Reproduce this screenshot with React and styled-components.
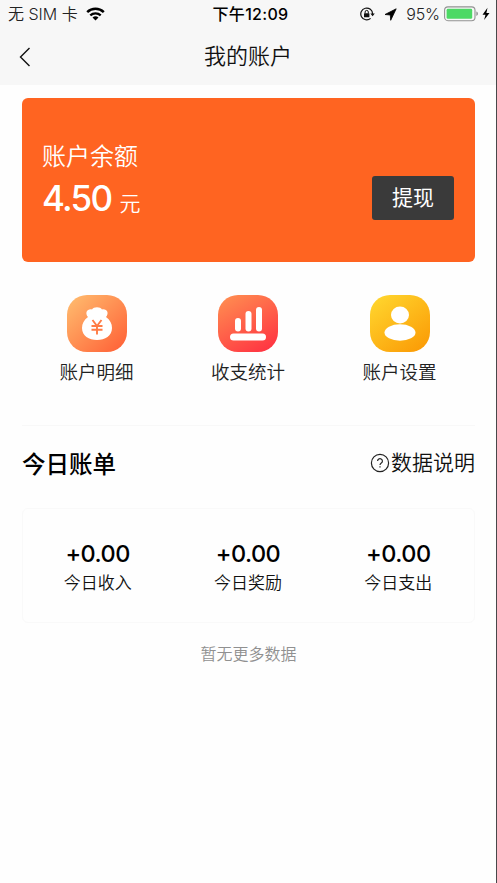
import styled, { createGlobalStyle } from "styled-components";

const services = [
  { label: "账户明细", icon: <BagIcon /> },
  { label: "收支统计", icon: <ChartIcon /> },
  { label: "账户设置", icon: <UserIcon /> },
];

const stats = [
  { label: "今日收入", value: "+0.00" },
  { label: "今日奖励", value: "+0.00" },
  { label: "今日支出", value: "+0.00" },
];

export default function App() {
  return (
    <Page>
      <GlobalStyle />
      <Header>
        <StatusBar>
          <Carrier>
            无 SIM 卡
            <WifiIcon />
          </Carrier>
          <Clock>下午12:09</Clock>
          <Indicators>
            <LockIcon />
            <LocationIcon />
            <Percent>95%</Percent>
            <BatteryIcon />
          </Indicators>
        </StatusBar>
        <NavBar>
          <BackButton aria-label="返回">
            <svg width="12" height="20" viewBox="0 0 12 20" fill="none">
              <path d="M10.5 1L1.5 10l9 9" stroke="#111" strokeWidth="1.4" />
            </svg>
          </BackButton>
          <h1>我的账户</h1>
        </NavBar>
      </Header>
      <Content>
        <BalanceCard>
          <div>
            <p className="label">账户余额</p>
            <p className="amount">
              4.50<span>元</span>
            </p>
          </div>
          <WithdrawButton>提现</WithdrawButton>
        </BalanceCard>
        <Services>
          {services.map((item) => (
            <Service key={item.label}>
              {item.icon}
              <span>{item.label}</span>
            </Service>
          ))}
        </Services>
        <BillHeader>
          <h2>今日账单</h2>
          <Help>
            <HelpIcon />
            数据说明
          </Help>
        </BillHeader>
        <StatsCard>
          {stats.map((item) => (
            <Stat key={item.label}>
              <strong>{item.value}</strong>
              <span>{item.label}</span>
            </Stat>
          ))}
        </StatsCard>
        <Empty>暂无更多数据</Empty>
      </Content>
    </Page>
  );
}

function WifiIcon() {
  return (
    <svg width="19" height="14" viewBox="0 0 19 14" fill="none">
      <path d="M1.2 5.1a12 12 0 0 1 16.6 0" stroke="#000" strokeWidth="2.5" />
      <path d="M4.3 8.4a7.6 7.6 0 0 1 10.4 0" stroke="#000" strokeWidth="2.3" />
      <path d="M9.5 13.6L6.5 10.6a4.4 4.4 0 0 1 6 0z" fill="#000" />
    </svg>
  );
}

function LockIcon() {
  return (
    <svg width="15" height="14" viewBox="0 0 15 14" fill="none">
      <path d="M12.6 7A5.9 5.9 0 1 0 10.6 11.4" stroke="#111" strokeWidth="1.2" />
      <path d="M10.4 6.4h4.4l-2.2 2.8z" fill="#111" />
      <rect x="4" y="6.2" width="5.4" height="4" rx=".5" fill="#111" />
      <path d="M5.1 6.5V5a1.6 1.6 0 0 1 3.2 0v1.5" stroke="#111" />
    </svg>
  );
}

function LocationIcon() {
  return (
    <svg width="13" height="13" viewBox="0 0 13 13">
      <path
        d="M12.2.8L1 6.5l5.300.500.400 5.300z"
        fill="#000"
        stroke="#000"
        strokeWidth=".8"
        strokeLinejoin="round"
      />
    </svg>
  );
}

function BatteryIcon() {
  return (
    <svg width="47" height="16" viewBox="0 0 47 16" fill="none">
      <rect x=".6" y=".9" width="30.4" height="13.8" rx="3.4" stroke="#929292" strokeWidth="1.1" />
      <rect x="2.6" y="2.8" width="25.6" height="10" rx="1.4" fill="#4cd964" />
      <path d="M32.3 5.6c2.2.6 2.2 3.8 0 4.4z" fill="#929292" />
      <path d="M43.5 1.7l-5 7h3l-1.4 5.4 5.4-7.2h-3.1z" fill="#000" />
    </svg>
  );
}

function BagIcon() {
  return (
    <svg width="60" height="57" viewBox="0 0 60 57">
      <defs>
        <linearGradient id="bag" x1="0" y1="0" x2="1" y2="1">
          <stop offset=".1" stopColor="#ffb56a" />
          <stop offset=".95" stopColor="#ff6237" />
        </linearGradient>
      </defs>
      <rect width="60" height="57" rx="20" fill="url(#bag)" />
      <path
        d="M21 22c-3.5-3.5-1-8.5 4-7.500 1.500-3 8.500-3 10 0 5-1 7.500 4 4 7.500 4 3 6 6.500 6 11C45 41 38 45 30 45S15 41 15 33c0-4.500 2-8 6-11z"
        fill="#fff"
      />
      <path
        d="M25.5 25l4.500 6 4.500-6M24.500 31h11M24.500 34.800h11M30 31v8.500"
        fill="none"
        stroke="#ff7c45"
        strokeWidth="1.9"
      />
    </svg>
  );
}

function ChartIcon() {
  return (
    <svg width="60" height="57" viewBox="0 0 60 57">
      <defs>
        <linearGradient id="chart" x1=".2" y1="0" x2=".8" y2="1">
          <stop offset="0" stopColor="#ff8a50" />
          <stop offset="1" stopColor="#ff3442" />
        </linearGradient>
      </defs>
      <rect width="60" height="57" rx="20" fill="url(#chart)" />
      <g fill="#fff">
        <rect x="17" y="23" width="6" height="13.5" rx="3" />
        <rect x="27.5" y="16" width="6" height="20.5" rx="3" />
        <rect x="38" y="12" width="6" height="24.5" rx="3" />
        <rect x="12" y="38.5" width="36" height="7" rx="3.5" />
      </g>
    </svg>
  );
}

function UserIcon() {
  return (
    <svg width="60" height="57" viewBox="0 0 60 57">
      <defs>
        <linearGradient id="user" x1=".1" y1="0" x2=".9" y2="1">
          <stop offset="0" stopColor="#ffd62e" />
          <stop offset="1" stopColor="#fb9a05" />
        </linearGradient>
      </defs>
      <rect width="60" height="57" rx="20" fill="url(#user)" />
      <ellipse cx="30" cy="20" rx="9" ry="8.5" fill="#fff" />
      <ellipse cx="30" cy="37.5" rx="15.5" ry="8.3" fill="#fff" />
    </svg>
  );
}

function HelpIcon() {
  return (
    <svg width="20" height="20" viewBox="0 0 20 20" fill="none" stroke="#222" strokeWidth="1.2">
      <circle cx="10" cy="10" r="8.6" />
      <path d="M7.6 8.1a2.4 2.4 0 1 1 3.7 2c-.9.6-1.3 1-1.3 2" />
      <path d="M10 13.2v1.4" />
    </svg>
  );
}

const GlobalStyle = createGlobalStyle`
  * {
    box-sizing: border-box;
  }
  body {
    margin: 0;
    background: #fefefe;
    font-family: Inter, "Noto Sans CJK SC", sans-serif;
    font-weight: 350;
    color: #000;
  }
  h1, h2, p {
    margin: 0;
  }
  button {
    font-family: inherit;
    border: 0;
    padding: 0;
  }
  svg {
    display: block;
    flex-shrink: 0;
  }
`;

const Page = styled.div`
  width: 497px;
  height: 883px;
  border-right: 1px solid #48484a;
  overflow: hidden;
`;

const Header = styled.header`
  height: 85px;
  background: #f7f7f7;
`;

const StatusBar = styled.div`
  display: grid;
  grid-template-columns: 1fr auto 1fr;
  align-items: center;
  height: 28px;
  padding: 0 5px 0 8px;
  font-size: 16px;
  line-height: 28px;
`;

const Carrier = styled.div`
  display: flex;
  align-items: center;
  gap: 8px;
  color: #222;
`;

const Clock = styled.div`
  font-weight: 500;
  letter-spacing: 0.3px;
  padding-left: 2px;
`;

const Indicators = styled.div`
  display: flex;
  align-items: center;
  justify-content: flex-end;
  gap: 9px;
`;

const Percent = styled.span`
  margin-right: -5px;
  color: #222;
  letter-spacing: -0.1px;
`;

const NavBar = styled.nav`
  display: grid;
  grid-template-columns: 50px 1fr 50px;
  align-items: center;
  height: 57px;
  h1 {
    font-size: 22px;
    font-weight: 350;
    line-height: 30px;
    padding-bottom: 2px;
    text-align: center;
    color: #111;
  }
`;

const BackButton = styled.button`
  background: none;
  padding-left: 19px;
`;

const Content = styled.main`
  padding: 13px 21px 0 22px;
`;

const BalanceCard = styled.section`
  display: flex;
  justify-content: space-between;
  height: 164px;
  padding: 41px 21px 0 20px;
  border-radius: 6px;
  background: #ff6421;
  color: #fff;
  .label {
    font-size: 24px;
    line-height: 36px;
  }
  .amount {
    font-size: 35px;
    font-weight: 550;
    line-height: 47px;
    letter-spacing: -1.7px;
  }
  .amount span {
    margin-left: 8px;
    font-size: 21px;
    font-weight: 350;
  }
`;

const WithdrawButton = styled.button`
  width: 82px;
  height: 44px;
  margin-top: 37px;
  border-radius: 3px;
  background: #3a3a3a;
  color: #fff;
  font-size: 21px;
  line-height: 42px;
`;

const Services = styled.section`
  display: grid;
  grid-template-columns: repeat(3, 1fr);
  column-gap: 1.5px;
  height: 164px;
  padding-top: 33px;
  border-bottom: 1px solid #f8f8f8;
`;

const Service = styled.div`
  display: flex;
  flex-direction: column;
  align-items: center;
  padding-right: 1px;
  span {
    margin-top: 5px;
    font-size: 18.5px;
    line-height: 30px;
    color: #222;
  }
`;

const BillHeader = styled.div`
  display: flex;
  align-items: center;
  justify-content: space-between;
  height: 74px;
  margin-bottom: 8px;
  h2 {
    font-size: 23.5px;
    font-weight: 500;
  }
`;

const Help = styled.div`
  display: flex;
  align-items: center;
  gap: 1px;
  font-size: 21px;
  line-height: 30px;
  color: #111;
`;

const StatsCard = styled.section`
  display: grid;
  grid-template-columns: repeat(3, 1fr);
  height: 115px;
  padding-top: 29px;
  border: 1px solid #f9f9f9;
  border-radius: 6px;
`;

const Stat = styled.div`
  display: flex;
  flex-direction: column;
  align-items: center;
  padding-right: 1px;
  strong {
    font-size: 23.5px;
    font-weight: 450;
    line-height: 31px;
    letter-spacing: -0.5px;
  }
  span {
    font-size: 17px;
    line-height: 29px;
    color: #111;
  }
`;

const Empty = styled.p`
  margin-top: 16px;
  font-size: 16px;
  line-height: 30px;
  text-align: center;
  color: #909090;
`;
